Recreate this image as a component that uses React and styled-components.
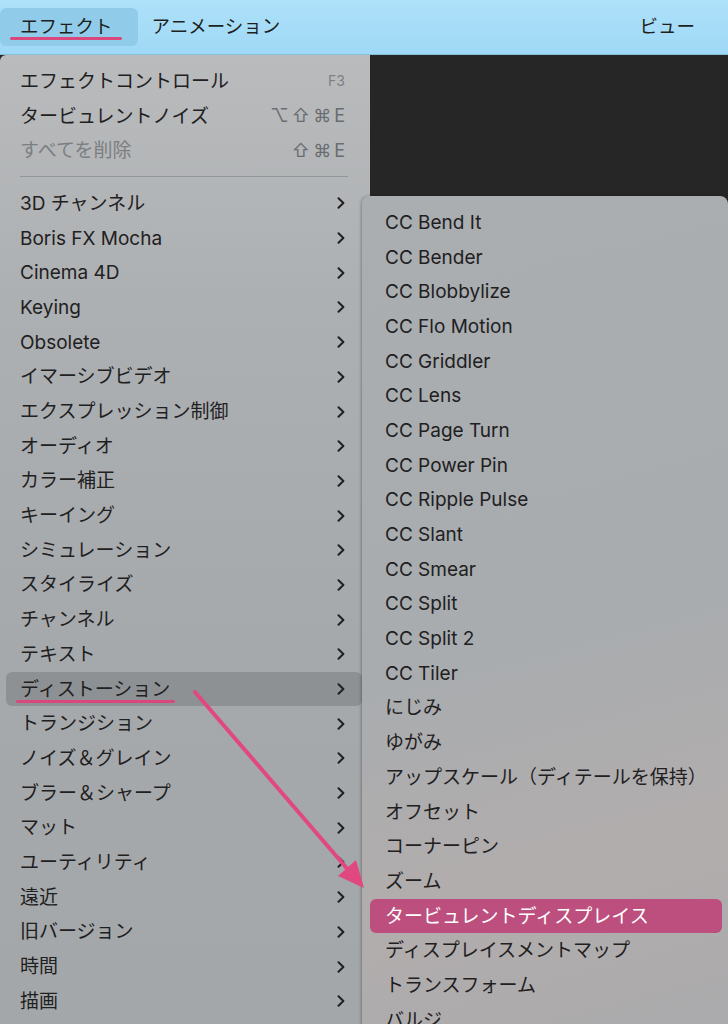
import React from "react";
import styled, { createGlobalStyle } from "styled-components";

const mainItems = [
  "3D チャンネル",
  "Boris FX Mocha",
  "Cinema 4D",
  "Keying",
  "Obsolete",
  "イマーシブビデオ",
  "エクスプレッション制御",
  "オーディオ",
  "カラー補正",
  "キーイング",
  "シミュレーション",
  "スタイライズ",
  "チャンネル",
  "テキスト",
  "ディストーション",
  "トランジション",
  "ノイズ＆グレイン",
  "ブラー＆シャープ",
  "マット",
  "ユーティリティ",
  "遠近",
  "旧バージョン",
  "時間",
  "描画",
];

const subItems = [
  "CC Bend It",
  "CC Bender",
  "CC Blobbylize",
  "CC Flo Motion",
  "CC Griddler",
  "CC Lens",
  "CC Page Turn",
  "CC Power Pin",
  "CC Ripple Pulse",
  "CC Slant",
  "CC Smear",
  "CC Split",
  "CC Split 2",
  "CC Tiler",
  "にじみ",
  "ゆがみ",
  "アップスケール（ディテールを保持）",
  "オフセット",
  "コーナーピン",
  "ズーム",
  "タービュレントディスプレイス",
  "ディスプレイスメントマップ",
  "トランスフォーム",
  "バルジ",
];

const HOVERED = "ディストーション";
const PICKED = "タービュレントディスプレイス";

const App = () => {
  return (
    <Page>
      <GlobalStyle />
      <MenuBar>
        <BarItem $active>
          <Marked $left={-10} $right={-9}>エフェクト</Marked>
        </BarItem>
        <BarItem>アニメーション</BarItem>
        <Spacer />
        <BarItem>ビュー</BarItem>
      </MenuBar>

      <Body>
        <MainMenu>
          <Row>
            <Label>エフェクトコントロール</Label>
            <Key $small>F3</Key>
          </Row>
          <Row>
            <Label>タービュレントノイズ</Label>
            <Key>⌥⇧⌘E</Key>
          </Row>
          <Row $disabled>
            <Label>すべてを削除</Label>
            <Key>⇧⌘E</Key>
          </Row>
          <Separator />
          {mainItems.map((name) => (
            <Row key={name} $hover={name === HOVERED}>
              <Label>
                {name === HOVERED ? (
                  <Marked $left={-4} $right={-5}>{name}</Marked>
                ) : (
                  name
                )}
              </Label>
              <Chevron viewBox="0 0 8 12">
                <path d="M1.5 1.2 L6.4 6 L1.5 10.8" />
              </Chevron>
            </Row>
          ))}
        </MainMenu>

        <RightCol>
          <Canvas />
          <SubMenu>
            {subItems.map((name) => (
              <SubRow key={name} $picked={name === PICKED}>
                {name}
              </SubRow>
            ))}
          </SubMenu>
        </RightCol>
      </Body>

      {/* 注釈の矢印 */}
      <Overlay viewBox="0 0 728 1024">
        <line x1="195" y1="692" x2="350" y2="872" stroke="#e0487f" strokeWidth="4" strokeLinecap="round" />
        <polygon points="364,888 338,876 356,860" fill="#e0487f" />
      </Overlay>
    </Page>
  );
};

export default App;

const GlobalStyle = createGlobalStyle`
html, body {
  margin: 0;
  padding: 0;
  background: #262626;
}
body {
  -webkit-font-smoothing: antialiased;
}
`;

const Page = styled.div`
position: relative;
width: 728px;
height: 1024px;
overflow: hidden;
display: flex;
flex-direction: column;
font-family: Inter, "Noto Sans CJK JP", sans-serif;
color: #1f2021;
`;

const MenuBar = styled.div`
flex: none;
height: 54px;
display: flex;
align-items: center;
padding-right: 33px;
background: linear-gradient(#aee1fa, #9fd8f5);
border-bottom: 1px solid #86bdd8;
font-size: 18.5px;
`;

const BarItem = styled.div`
height: 37px;
display: flex;
align-items: center;
line-height: 1;
padding: ${(p) => (p.$active ? "0 25px 1px 20px" : "0 0 1px 0")};
margin-right: ${(p) => (p.$active ? "14px" : "0")};
border-radius: 6px;
background: ${(p) => (p.$active ? "#90cce9" : "transparent")};
color: #1d1f20;
`;

const Spacer = styled.div`
flex: 1;
`;

const Marked = styled.span`
position: relative;
display: inline-block;
line-height: 1;

&::after {
  content: "";
  position: absolute;
  left: ${(p) => p.$left}px;
  right: ${(p) => p.$right}px;
  top: calc(100% + 1px);
  height: 3px;
  border-radius: 2px;
  background: #d9477d;
}
`;

const Body = styled.div`
flex: 1;
min-height: 0;
display: grid;
grid-template-columns: 370px 1fr;
`;

const MainMenu = styled.div`
padding: 9px 8px 0 6px;
border-top-left-radius: 6px;
background: linear-gradient(#b9bbbd 0%, #adb0b2 25%, #a6a9ab 60%, #a4a7a9 100%);
`;

const Row = styled.div`
height: 34.7px;
display: flex;
align-items: center;
padding: 0 17px 0 14px;
border-radius: 6px;
background: ${(p) => (p.$hover ? "#8e9193" : "transparent")};
color: ${(p) => (p.$disabled ? "#7c7f81" : "#1f2021")};
`;

const Label = styled.div`
font-size: 19px;
line-height: 1;
white-space: nowrap;
`;

const Key = styled.div`
margin-left: auto;
font-family: Inter, "DejaVu Sans", sans-serif;
font-size: ${(p) => (p.$small ? "14px" : "18px")};
letter-spacing: ${(p) => (p.$small ? "0" : "3px")};
margin-right: ${(p) => (p.$small ? "0" : "-3px")};
color: ${(p) => (p.$small ? "#7e8183" : "#6a6d70")};
line-height: 1;
`;

const Separator = styled.div`
height: 1px;
margin: 8px 14px 9px 14px;
background: #939698;
`;

const Chevron = styled.svg`
margin-left: auto;
width: 8px;
height: 12px;
fill: none;
stroke: #1f2021;
stroke-width: 2;
stroke-linecap: round;
stroke-linejoin: round;
`;

const RightCol = styled.div`
min-width: 0;
display: flex;
flex-direction: column;
background: #262626;
`;

const Canvas = styled.div`
flex: none;
height: 141px;
background: #262626;
`;

const SubMenu = styled.div`
flex: 1;
width: 366px;
margin-left: -8px;
padding: 9px 6px 0 8px;
box-sizing: border-box;
border-radius: 8px 8px 0 0;
background: linear-gradient(165deg, #aaaeb1 0%, #a8acaf 50%, #b2adad 78%, #aaaaac 100%);
box-shadow: -1px 0 3px rgba(0, 0, 0, 0.28);
`;

const SubRow = styled.div`
height: 34.7px;
display: flex;
align-items: center;
padding: 0 15px;
border-radius: 6px;
font-size: 19px;
line-height: 1;
white-space: nowrap;
background: ${(p) => (p.$picked ? "#bc4f7e" : "transparent")};
color: ${(p) => (p.$picked ? "#ffffff" : "#1f2021")};
`;

const Overlay = styled.svg`
position: absolute;
left: 0;
top: 0;
width: 728px;
height: 1024px;
pointer-events: none;
`;
